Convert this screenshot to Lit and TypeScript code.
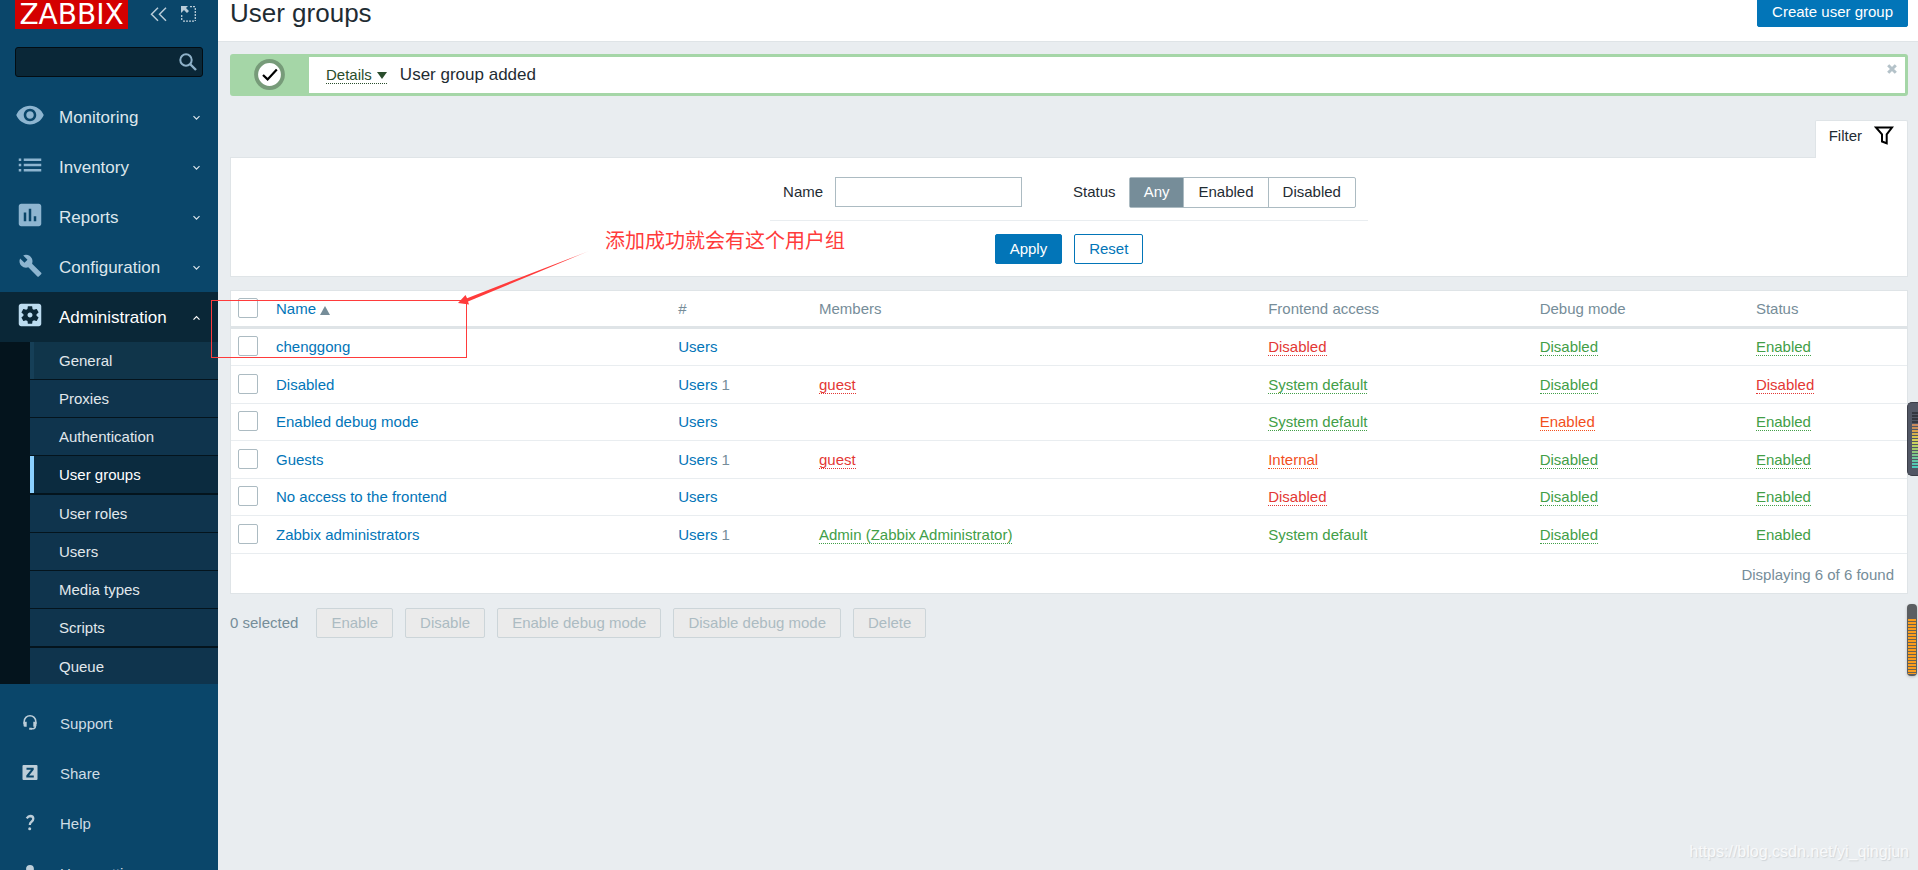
import { LitElement, html, css, svg, nothing } from "lit";
import { customElement, state } from "lit/decorators.js";
import { classMap } from "lit/directives/class-map.js";

type Tone = "green" | "red" | "orange";

interface Cell {
  text: string;
  tone: Tone;
  plain?: boolean;
}

interface Group {
  name: string;
  count?: number;
  member?: Cell;
  access: Cell;
  debug: Cell;
  status: Cell;
}

const green = (text: string, plain = false): Cell => ({ text, tone: "green", plain });
const red = (text: string): Cell => ({ text, tone: "red" });
const orange = (text: string): Cell => ({ text, tone: "orange" });

const GROUPS: Group[] = [
  { name: "chenggong", access: red("Disabled"), debug: green("Disabled"), status: green("Enabled") },
  { name: "Disabled", count: 1, member: red("guest"), access: green("System default"), debug: green("Disabled"), status: red("Disabled") },
  { name: "Enabled debug mode", access: green("System default"), debug: orange("Enabled"), status: green("Enabled") },
  { name: "Guests", count: 1, member: red("guest"), access: orange("Internal"), debug: green("Disabled"), status: green("Enabled") },
  { name: "No access to the frontend", access: red("Disabled"), debug: green("Disabled"), status: green("Enabled") },
  { name: "Zabbix administrators", count: 1, member: green("Admin (Zabbix Administrator)"), access: green("System default", true), debug: green("Disabled"), status: green("Enabled", true) },
];

const ICONS = {
  eye: svg`<path d="M12 4.5C7 4.5 2.730 7.610 1 12c1.730 4.390 6 7.500 11 7.500s9.270-3.110 11-7.500c-1.730-4.390-6-7.500-11-7.500zM12 17c-2.760 0-5-2.240-5-5s2.240-5 5-5 5 2.240 5 5-2.240 5-5 5zm0-8c-1.660 0-3 1.340-3 3s1.340 3 3 3 3-1.340 3-3-1.340-3-3-3z"/>`,
  list: svg`<path d="M3 6.700h2v2H3zM7 6.700h14v2H7zM3 10.900h2v2H3zM7 10.900h14v2H7zM3 15.100h2v2H3zM7 15.100h14v2H7z"/>`,
  chart: svg`<path d="M19 3H5c-1.100 0-2 .9-2 2v14c0 1.100.9 2 2 2h14c1.100 0 2-.9 2-2V5c0-1.100-.9-2-2-2zM9 17H7v-7h2v7zm4 0h-2V7h2v10zm4 0h-2v-4h2v4z"/>`,
  wrench: svg`<path transform="translate(2.800 3) scale(.8)" d="M22.700 19l-9.100-9.100c.9-2.300.4-5-1.500-6.900-2-2-5-2.400-7.400-1.300L9 6 6 9 1.600 4.700C.4 7.100.9 10.100 2.900 12.100c1.900 1.900 4.600 2.400 6.900 1.500l9.100 9.100c.4.4 1 .4 1.400 0l2.300-2.300c.5-.4.5-1.100.1-1.400z"/>`,
  gear: svg`<path d="M12 10c-1.100 0-2 .9-2 2s.9 2 2 2 2-.9 2-2-.9-2-2-2zm7-7H5c-1.110 0-2 .9-2 2v14c0 1.100.89 2 2 2h14c1.110 0 2-.9 2-2V5c0-1.100-.89-2-2-2zm-1.750 9c0 .23-.02.46-.05.68l1.480 1.160c.13.11.17.3.08.45l-1.400 2.420c-.09.15-.27.21-.43.15l-1.740-.7c-.36.28-.76.51-1.180.69l-.26 1.850c-.03.17-.18.3-.35.3h-2.800c-.17 0-.32-.13-.35-.29l-.26-1.850c-.43-.18-.82-.41-1.180-.69l-1.740.7c-.16.06-.34 0-.43-.15l-1.400-2.420c-.09-.15-.05-.34.08-.45l1.480-1.160c-.03-.23-.05-.46-.05-.69 0-.23.02-.46.05-.68l-1.480-1.160c-.13-.11-.17-.3-.08-.45l1.400-2.420c.09-.15.27-.21.43-.15l1.740.7c.36-.28.76-.51 1.180-.69l.26-1.850c.03-.17.18-.3.35-.3h2.800c.17 0 .32.13.35.29l.26 1.850c.43.18.82.41 1.180.69l1.740-.7c.16-.06.34 0 .43.15l1.400 2.420c.09.15.05.34-.08.45l-1.480 1.160c.03.23.05.46.05.69z"/>`,
};

const MENU = [
  { label: "Monitoring", icon: ICONS.eye },
  { label: "Inventory", icon: ICONS.list },
  { label: "Reports", icon: ICONS.chart },
  { label: "Configuration", icon: ICONS.wrench },
  { label: "Administration", icon: ICONS.gear, open: true },
];

const SUBMENU = ["General", "Proxies", "Authentication", "User groups", "User roles", "Users", "Media types", "Scripts", "Queue"];

const SERVICE = [
  { label: "Support", icon: svg`<path d="M4.200 11V8.500a5.800 5.800 0 0 1 11.600 0V11M15.300 12v1.500q0 2-2.300 2.300h-2" fill="none" stroke="currentColor" stroke-width="1.500"/><path d="M3.500 8.800h3.200v5H5q-1.500 0-1.500-1.500zM13.300 8.800h3.200v3.500q0 1.500-1.500 1.500h-1.700zM9.200 14.800h2.600v2H9.200z"/>` },
  { label: "Share", icon: svg`<path fill-rule="evenodd" d="M3.500 2h13q1 0 1 1v13q0 1-1 1h-13q-1 0-1-1V3q0-1 1-1zM6.500 4.800v2H11l-4.700 5.700v1.900h7.500v-2H9.100l4.600-5.700V4.800z"/>` },
  { label: "Help", icon: svg`<path d="M6.700 5.300Q8.300 3 10.300 3q3 .2 3 2.800 0 1.600-1.800 2.900T9.800 12" fill="none" stroke="currentColor" stroke-width="2.300"/><circle cx="9.700" cy="15.700" r="1.500"/>` },
  { label: "User settings", icon: svg`<circle cx="10" cy="5.800" r="3.900"/><path d="M3 17q0-5.500 7-5.500t7 5.500z"/>` },
];

const METER_COLORS = ["#33363f", "#33363f", "#33363f", "#33363f", "#c98a5e", "#c98e55", "#d9a24c", "#d6b04e", "#d9c34f", "#d4cf58", "#c9d35e", "#b5cf63", "#a3cb6c", "#8fc87a", "#7cc78c", "#6ec79a", "#62c7a6", "#57c9b2", "#4ccdbb"];

@customElement("app-root")
export class AppRoot extends LitElement {
  @state() private status = "Any";

  static styles = css`
    :host {
      display: block;
      position: relative;
      height: 100vh;
      overflow: hidden;
      background: #e9edf0;
      color: #1f2c33;
      font: 15px/20px "Liberation Sans", Arial, sans-serif;
    }
    * { box-sizing: border-box; }
    a { color: #0275b8; text-decoration: none; }
    ul { list-style: none; margin: 0; padding: 0; }
    button, input { font: inherit; color: inherit; margin: 0; }
    svg { display: block; fill: currentColor; flex: none; }
    .page { display: flex; align-items: stretch; min-height: calc(100vh + 16px); }

    .side { flex: none; width: 218px; background: #0a466a; }
    .brand { display: flex; align-items: flex-start; height: 47px; padding-left: 15px; }
    .logo { background: #d40000; color: #fff; width: 113px; height: 29px; font: 28px/30px "DejaVu Sans", sans-serif; text-align: center; }
    .tool { border: 0; padding: 0; background: none; color: #b9ccd8; }
    .collapse { margin: 7px 0 0 22px; }
    .kiosk { margin: 6px 0 0 14px; }
    .search { display: flex; align-items: center; margin: 0 15px 15px; height: 30px; border: 1px solid #030d13; border-radius: 3px; background: #0a2737; padding-right: 5px; }
    .search input { flex: 1; min-width: 0; height: 28px; border: 0; background: none; padding: 0 8px; outline: none; color: #fff; }
    .search button { border: 0; padding: 0; background: none; color: #8eb1c8; }
    .top { display: flex; align-items: center; height: 50px; padding: 2px 18px 0 15px; color: #dde6ec; font-size: 17px; }
    .top .icon { width: 30px; height: 30px; margin: -6px 14px 0 0; color: #8eb5d0; }
    .top .text { flex: 1; }
    .top.open { background: #0a2737; color: #fff; }
    .top.open .icon { color: #bcdcf0; }
    .sub { border-left: 30px solid #04141d; background: #0f344d; }
    .sub li { border-bottom: 1px solid #04141d; }
    .sub li:nth-child(4), .sub li:nth-child(8) { border-bottom-width: 2px; }
    .sub li:last-child { border-bottom: 0; }
    .sub a { display: block; height: 37px; line-height: 37px; padding-left: 25px; border-left: 4px solid transparent; color: #e1e8ec; }
    .sub li:last-child a { height: 36px; }
    .sub li:first-child a { border-left-color: #163f57; background: #10354a; }
    .sub a.current { border-left-color: #8ad0ff; background: #0b2b3f; color: #fff; }
    .service { padding-top: 15px; }
    .service a { display: flex; align-items: center; gap: 20px; height: 50px; padding-left: 20px; color: #cfdde5; }
    .service svg { margin-top: -2px; color: #bdced9; }

    .main { flex: 1; min-width: 0; display: flex; flex-direction: column; }
    .head { display: flex; justify-content: space-between; align-items: flex-end; height: 42px; padding: 0 10px 14px 12px; border-bottom: 1px solid #dfe4e7; background: #fff; }
    h1 { margin: 0; font-size: 26px; line-height: 28px; font-weight: 400; }
    .btn { height: 30px; padding: 0 14px; border: 1px solid #0275b8; border-radius: 2px; background: #0275b8; color: #fff; line-height: 28px; white-space: nowrap; }
    .btn.alt { background: #fff; color: #0275b8; }
    .btn:disabled { border-color: #ccd5d9; background: #ebebeb; color: #acbbc2; }
    .body { padding: 12px 10px 0 12px; }

    .msg { display: flex; align-items: center; height: 42px; border: 3px solid #a5d6a7; border-radius: 3px; background: #fff; }
    .mark { display: grid; place-items: center; width: 76px; padding: 0 3px 1px 0; align-self: stretch; background: #a5d6a7; }
    .details { display: flex; align-items: center; gap: 5px; height: 18px; margin: 0 13px 0 17px; padding: 0; border: 0; border-bottom: 1px dotted #2a4d2c; background: none; color: #2a4d2c; line-height: 17px; }
    .details svg { margin-top: 2px; }
    .note { flex: 1; font-size: 17px; }
    .close { align-self: flex-start; border: 0; padding: 0; margin: 7px 8px 0 0; background: none; color: #b4c2c9; }

    .tabs { display: flex; justify-content: flex-end; margin-top: 24px; }
    .tab { display: flex; align-items: center; gap: 12px; height: 38px; margin-bottom: -1px; padding: 0 13px 8px; border: 1px solid #dfe4e7; border-bottom: 0; border-radius: 2px 2px 0 0; background: #fff; color: inherit; z-index: 1; }
    .panel { border: 1px solid #dfe4e7; background: #fff; }
    .filter { display: flex; flex-direction: column; align-items: center; height: 120px; padding-top: 19px; }
    .fields { display: flex; align-items: flex-start; height: 44px; padding: 0 12px 12px 13px; border-bottom: 1px solid #e9edf0; line-height: 30px; }
    .fields .field { width: 187px; height: 30px; margin: 0 51px 0 12px; padding: 0 5px; border: 1px solid #acbbc2; border-radius: 0; background: #fff; outline: none; }
    .seg { display: flex; height: 31px; margin-left: 13px; border: 1px solid #acbbc2; border-radius: 2px; }
    .seg label { padding: 0 14px; line-height: 28px; border-left: 1px solid #acbbc2; }
    .seg label:first-child { border-left: 0; }
    .seg label.on { background: #768d99; color: #fff; }
    .seg input { appearance: none; width: 0; height: 0; position: absolute; }
    .actions { display: flex; gap: 12px; padding-top: 13px; }

    .list { margin-top: 13px; }
    table { width: 100%; border-collapse: separate; border-spacing: 0; table-layout: fixed; }
    th, td { height: 37px; padding: 0 7px; text-align: left; font-weight: 400; border-bottom: 1px solid #e9edf0; white-space: nowrap; }
    th { height: 38px; border-bottom: 3px solid #dfe4e7; color: #768d99; }
    tr:nth-child(even) td { height: 38px; }
    .c-check { width: 38px; }
    .c-name { width: 24%; }
    .c-num { width: 8.4%; }
    .c-member { width: 26.8%; }
    .c-access { width: 16.2%; }
    .c-debug { width: 12.9%; }
    .check { appearance: none; display: block; width: 20px; height: 20px; margin-top: -2px; border: 1px solid #acbbc2; border-radius: 2px; background: #fff; }
    .sort { display: inline-flex; align-items: center; gap: 4px; }
    .sort svg { color: #768d99; margin-top: 3px; }
    .count { color: #768d99; }
    .tone { border-bottom: 1px dotted currentColor; }
    .tone.plain { border-bottom: 0; }
    .tone.green { color: #429e47; }
    .tone.red { color: #e33734; }
    .tone.orange { color: #f24f1d; }
    .total { padding: 11px 13px 8px; text-align: right; color: #768d99; }
    .bulk { display: flex; align-items: center; gap: 12px; padding-top: 14px; color: #768d99; }
    .bulk span { margin-right: 6px; }
    .foot { margin-top: auto; padding-bottom: 10px; text-align: center; color: #768d99; }

    .marker { position: absolute; left: 211px; top: 300px; width: 256px; height: 58px; border: 1px solid #ff3b3b; pointer-events: none; }
    .arrow { position: absolute; left: 456px; top: 248px; pointer-events: none; }
    .remark { position: absolute; left: 605px; top: 226px; color: #ff3b3b; font: 20px/28px "Noto Sans CJK SC", sans-serif; }
    .water { position: absolute; right: 9px; bottom: 8px; color: #f8f9fa; font-size: 16px; text-shadow: 1px 1px 1px #d0d5d8; }
    .meter { position: absolute; right: 0; top: 402px; width: 11px; height: 74px; padding: 9px 0 0 4px; border: 1px solid #3b3e48; border-right: 0; border-radius: 5px 0 0 5px; background: #525765; }
    .meter i { display: block; height: 2px; margin-bottom: 1px; }
    .gauge { position: absolute; right: 1px; top: 604px; width: 10px; height: 72px; padding: 15px 1px 2px; border-radius: 4px; background: #5b5e61; box-shadow: 0 1px 3px #bbb; }
    .gauge i { display: block; height: 100%; background: repeating-linear-gradient(#fb9d1c 0 2px, #6b6350 2px 3px); }
  `;

  private tone(c: Cell) {
    return html`<a href="#" class=${classMap({ tone: true, [c.tone]: true, plain: !!c.plain })}>${c.text}</a>`;
  }

  private sidebar() {
    return html`
      <aside class="side">
        <div class="brand">
          <a class="logo" href="#">ZABBIX</a>
          <button class="tool collapse" aria-label="Collapse sidebar">
            <svg width="17" height="15" viewBox="0 0 17 15"><path d="M8 .8 1.500 7.300 8 13.800M16 .8 9.500 7.300 16 13.800" fill="none" stroke="currentColor" stroke-width="1.500"/></svg>
          </button>
          <button class="tool kiosk" aria-label="Hide sidebar">
            <svg width="15" height="16" viewBox="0 0 15 16"><path d="M0 0h7L5 2l3 3-2 2-3-3-3 3z"/><path d="M9 .7h5.500M14.300 2v13M.7 9v6M2 15.200h12" fill="none" stroke="currentColor" stroke-width="1.300" stroke-dasharray="2 1"/></svg>
          </button>
        </div>
        <form class="search" @submit=${(e: Event) => e.preventDefault()}>
          <input type="text" aria-label="Search" />
          <button type="submit" aria-label="Search">
            <svg width="18" height="18" viewBox="0 0 18 18"><circle cx="7" cy="7" r="5.700" fill="none" stroke="currentColor" stroke-width="2"/><path d="M11 11l6 6" stroke="currentColor" stroke-width="2.400"/></svg>
          </button>
        </form>
        <nav>
          ${MENU.map((m) => html`
            <a href="#" class=${classMap({ top: true, open: !!m.open })}>
              <svg class="icon" viewBox="0 0 24 24">${m.icon}</svg>
              <span class="text">${m.label}</span>
              <svg width="7" height="6" viewBox="0 0 7 6"><path d=${m.open ? "M.5 4.600 3.500 1.600l3 3" : "M.5 1.200l3 3 3-3"} fill="none" stroke="currentColor" stroke-width="1.200"/></svg>
            </a>`)}
          <ul class="sub">
            ${SUBMENU.map((s) => html`<li><a href="#" class=${classMap({ current: s === "User groups" })}>${s}</a></li>`)}
          </ul>
        </nav>
        <nav class="service">
          ${SERVICE.map((s) => html`<a href="#"><svg width="20" height="20" viewBox="0 0 20 20">${s.icon}</svg>${s.label}</a>`)}
        </nav>
      </aside>`;
  }

  private filter() {
    return html`
      <div class="tabs">
        <a href="#" class="tab">Filter
          <svg width="20" height="19" viewBox="0 0 20 19"><path d="M2 1.500h16l-5.300 6.800v9L8 15.500V8.300z" fill="none" stroke="#000" stroke-width="2"/></svg>
        </a>
      </div>
      <form class="panel filter" @submit=${(e: Event) => e.preventDefault()}>
        <div class="fields">
          <label for="name">Name</label>
          <input class="field" id="name" type="text" />
          <span id="status">Status</span>
          <div class="seg" role="radiogroup" aria-labelledby="status">
            ${["Any", "Enabled", "Disabled"].map((v) => html`
              <label class=${classMap({ on: this.status === v })}><input type="radio" name="status" .checked=${this.status === v} @change=${() => (this.status = v)} />${v}</label>`)}
          </div>
        </div>
        <div class="actions">
          <button class="btn" type="submit">Apply</button>
          <button class="btn alt" type="reset">Reset</button>
        </div>
      </form>`;
  }

  private table() {
    return html`
      <div class="panel list">
        <table>
          <thead>
            <tr>
              <th class="c-check"><input class="check" type="checkbox" aria-label="Select all" /></th>
              <th class="c-name"><a class="sort" href="#">Name<svg width="10" height="9" viewBox="0 0 10 9"><path d="M5 0l5 9H0z"/></svg></a></th>
              <th class="c-num">#</th>
              <th class="c-member">Members</th>
              <th class="c-access">Frontend access</th>
              <th class="c-debug">Debug mode</th>
              <th>Status</th>
            </tr>
          </thead>
          <tbody>
            ${GROUPS.map((g) => html`
              <tr>
                <td><input class="check" type="checkbox" aria-label=${g.name} /></td>
                <td><a href="#">${g.name}</a></td>
                <td><a href="#">Users</a>${g.count ? html` <span class="count">${g.count}</span>` : nothing}</td>
                <td>${g.member ? this.tone(g.member) : nothing}</td>
                <td>${this.tone(g.access)}</td>
                <td>${this.tone(g.debug)}</td>
                <td>${this.tone(g.status)}</td>
              </tr>`)}
          </tbody>
        </table>
        <div class="total">Displaying 6 of 6 found</div>
      </div>
      <div class="bulk">
        <span>0 selected</span>
        ${["Enable", "Disable", "Enable debug mode", "Disable debug mode", "Delete"].map((b) => html`<button class="btn" disabled>${b}</button>`)}
      </div>`;
  }

  render() {
    return html`
      <div class="page">
        ${this.sidebar()}
        <main class="main">
          <header class="head">
            <h1>User groups</h1>
            <button class="btn">Create user group</button>
          </header>
          <div class="body">
            <div class="msg" role="status">
              <div class="mark">
                <svg width="31" height="31" viewBox="0 0 31 31"><circle cx="15.500" cy="15.500" r="13.400" fill="#fff" stroke="#779b79" stroke-width="4"/><path d="M9 16l4.600 4.400 9.200-10" fill="none" stroke="#000" stroke-width="2.200"/></svg>
              </div>
              <button class="details">Details<svg width="10" height="7" viewBox="0 0 10 7"><path d="M0 0h10L5 7z"/></svg></button>
              <span class="note">User group added</span>
              <button class="close" aria-label="Close">
                <svg width="10" height="10" viewBox="0 0 10 10"><path d="M1.200 1.200l7.600 7.600M8.800 1.200 1.200 8.800" stroke="currentColor" stroke-width="3"/></svg>
              </button>
            </div>
            ${this.filter()}
            ${this.table()}
          </div>
          <footer class="foot">Zabbix 5.2.0. © 2001–2020, Zabbix SIA</footer>
        </main>
      </div>
      <div class="marker"></div>
      <svg class="arrow" width="136" height="60" viewBox="0 0 136 60">
        <defs><linearGradient id="fade" x1="0" x2="1"><stop offset="0.850" stop-color="#ff3b3b"/><stop offset="1" stop-color="#ff3b3b" stop-opacity=".35"/></linearGradient></defs>
        <path fill="url(#fade)" d="M2 55l7.500-8 1.600 3.200L133 3 12 53.500l1 2.900z"/>
      </svg>
      <div class="remark">添加成功就会有这个用户组</div>
      <div class="water">https://blog.csdn.net/yi_qingjun</div>
      <div class="meter">${METER_COLORS.map((c) => html`<i style="background:${c}"></i>`)}</div>
      <div class="gauge"><i></i></div>
    `;
  }
}
